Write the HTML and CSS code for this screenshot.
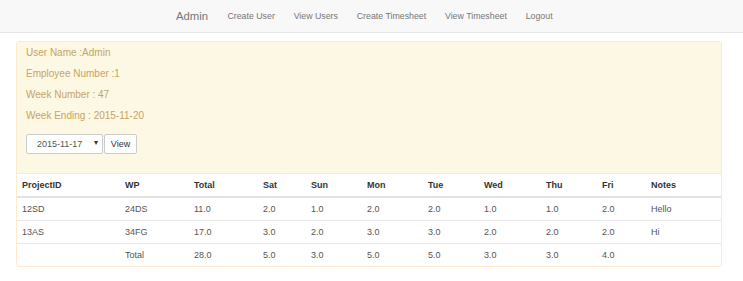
FILE: index.html
```html
<!DOCTYPE html>
<html lang="en">
<head>
  <meta charset="UTF-8" />
  <title>View Timesheet</title>
  <link rel="stylesheet" href="styles.css">
</head>
<body>
  <div class="navbar">
    <div class="nav-inner">
      <a class="brand" href="#">Admin</a>
      <a href="#">Create User</a>
      <a href="#">View Users</a>
      <a href="#">Create Timesheet</a>
      <a href="#">View Timesheet</a>
      <a href="#">Logout</a>
    </div>
  </div>

  <div class="panel">
    <div class="panel-heading">
      <p>User Name :Admin</p>
      <p>Employee Number :1</p>
      <p>Week Number : 47</p>
      <p>Week Ending : 2015-11-20</p>
      <form class="week-form">
        <span class="select-wrap">
          <select name="week">
            <option>2015-11-17</option>
            <option>2015-11-10</option>
          </select>
        </span>
        <button type="submit">View</button>
      </form>
    </div>
    <table>
      <colgroup>
        <col style="width:103px"><col style="width:69px"><col style="width:69px">
        <col style="width:48px"><col style="width:56px"><col style="width:61px">
        <col style="width:56px"><col style="width:62px"><col style="width:56px">
        <col style="width:49px"><col style="width:75px">
      </colgroup>
      <thead>
        <tr>
          <th>ProjectID</th><th>WP</th><th>Total</th><th>Sat</th><th>Sun</th>
          <th>Mon</th><th>Tue</th><th>Wed</th><th>Thu</th><th>Fri</th><th>Notes</th>
        </tr>
      </thead>
      <tbody>
        <tr>
          <td>12SD</td><td>24DS</td><td>11.0</td><td>2.0</td><td>1.0</td>
          <td>2.0</td><td>2.0</td><td>1.0</td><td>1.0</td><td>2.0</td><td>Hello</td>
        </tr>
        <tr>
          <td>13AS</td><td>34FG</td><td>17.0</td><td>3.0</td><td>2.0</td>
          <td>3.0</td><td>3.0</td><td>2.0</td><td>2.0</td><td>2.0</td><td>Hi</td>
        </tr>
        <tr>
          <td></td><td>Total</td><td>28.0</td><td>5.0</td><td>3.0</td>
          <td>5.0</td><td>5.0</td><td>3.0</td><td>3.0</td><td>4.0</td><td></td>
        </tr>
      </tbody>
    </table>
  </div>
</body>
</html>
```

FILE: styles.css
```css
body { font-family: 'Liberation Sans', Arial, sans-serif; background: #fff; margin: 0; color: #555; font-size: 9px; }
.navbar { height: 32px; background: #f8f8f8; border-bottom: 1px solid #e7e7e7; }
.nav-inner { display: flex; align-items: center; height: 32px; padding-left: 167px; }
.nav-inner a { color: #777; text-decoration: none; font-size: 8.8px; padding: 0 9.4px; }
.nav-inner a.brand { font-size: 11.3px; padding: 0 10px 0 9px; }
.panel { margin: 8px 21px 0 16px; width: 704px; border: 1px solid #faebcc; border-radius: 3px; background: #fff; }
.panel-heading { background: #fcf8e3; color: #c6a468; padding: 4px 9px 19px; border-bottom: 1px solid #faebcc; font-size: 10px; }
.panel-heading p { margin: 0 0 7px; line-height: 14px; }
.week-form { display: flex; gap: 1px; margin-top: 11px; }
.select-wrap { position: relative; display: inline-block; }
.select-wrap::after { content: '\25BE'; position: absolute; right: 5px; top: 4px; font-size: 8px; color: #333; pointer-events: none; }
select { appearance: none; -webkit-appearance: none; width: 77px; height: 20px; padding: 0 0 0 10px; border: 1px solid #ccc; border-radius: 2px; background: #fff; color: #555; font-family: inherit; font-size: 9px; }
button { height: 20px; width: 33px; padding: 0; border: 1px solid #ccc; border-radius: 2px; background: #fff; color: #333; font-family: inherit; font-size: 9px; }
table { width: 704px; table-layout: fixed; border-collapse: collapse; }
th, td { text-align: left; padding: 5px; line-height: 12px; height: 12px; }
th { color: #333; font-weight: bold; border-bottom: 2px solid #e3e3e3; }
td { border-top: 1px solid #e8e8e8; color: #555; }
```
